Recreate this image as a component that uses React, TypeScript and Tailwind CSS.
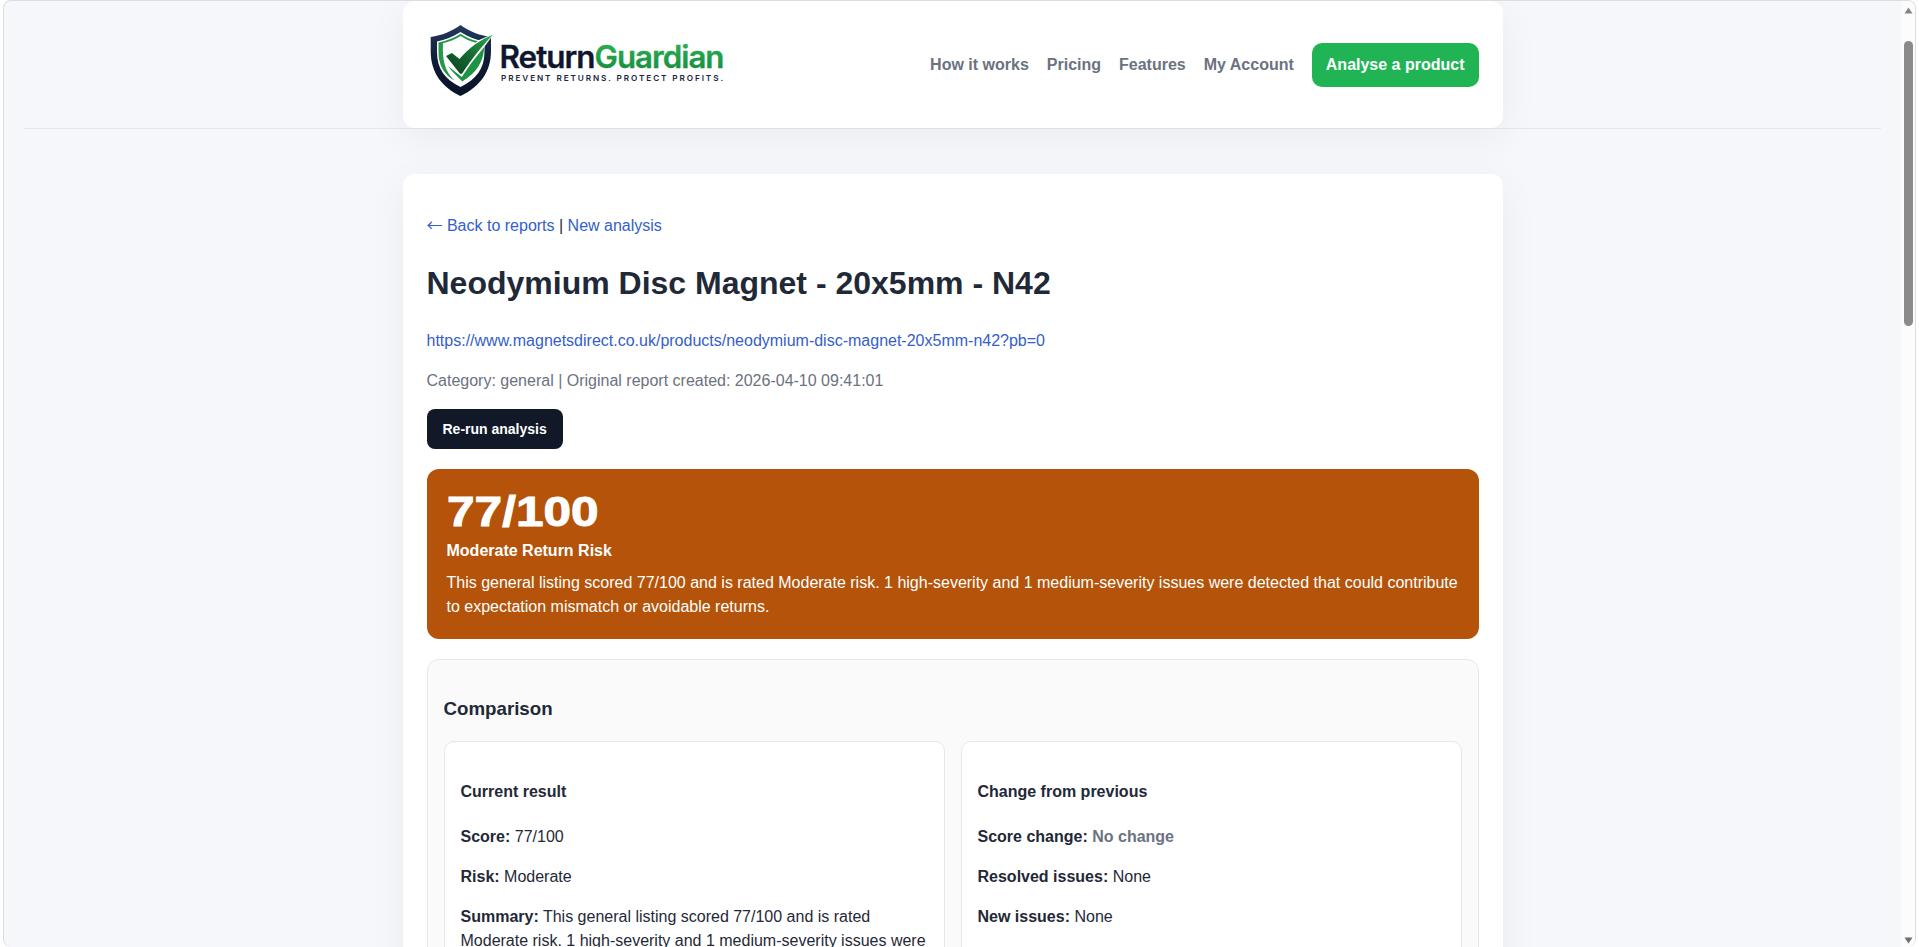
import React from 'react';

const navLinks = ['How it works', 'Pricing', 'Features', 'My Account'];

const summary =
  'This general listing scored 77/100 and is rated Moderate risk. 1 high-severity and 1 medium-severity issues were detected that could contribute to expectation mismatch or avoidable returns.';

const currentResult = [
  { label: 'Score:', value: '77/100' },
  { label: 'Risk:', value: 'Moderate' },
  { label: 'Summary:', value: summary },
];

const changes = [
  { label: 'Score change:', value: 'No change', muted: true },
  { label: 'Resolved issues:', value: 'None', muted: false },
  { label: 'New issues:', value: 'None', muted: false },
];

const Logo: React.FC = () => (
  <svg width="300" height="80" viewBox="0 0 300 80" role="img" aria-label="ReturnGuardian">
    <defs>
      <linearGradient id="navy" x1="0" y1="0" x2="0" y2="1">
        <stop offset="0" stopColor="#233a5e" />
        <stop offset="0.5" stopColor="#101c36" />
        <stop offset="1" stopColor="#0a1228" />
      </linearGradient>
      <linearGradient id="tick" x1="0" y1="1" x2="1" y2="0">
        <stop offset="0" stopColor="#0a4020" />
        <stop offset="0.5" stopColor="#156b33" />
        <stop offset="1" stopColor="#2cae4c" />
      </linearGradient>
      <linearGradient id="word" x1="0" y1="0" x2="0" y2="1">
        <stop offset="0" stopColor="#2fb457" />
        <stop offset="1" stopColor="#128a3c" />
      </linearGradient>
    </defs>
    {/* Shield */}
    <path fill="url(#navy)" d="M33.500 5 C42 11 52 15.500 64 17 V31 C64 53 52 67 33.500 76 C15 67 3.700 53 3.700 31 V17 C15 15.500 25 11 33.500 5 Z" />
    <path fill="#fff" d="M33.500 12 C41 16.800 49 20 57.500 21.500 V32 C57.500 49 49 59.500 33.500 67 C18 59.500 10 49 10 32 V21.500 C18 20 26 16.800 33.500 12 Z" />
    {/* Inner outline */}
    <path
      fill="#25984a"
      d="M33.500 13.800 C39 17.500 44 19.700 51 21.200 L49 22.700 C43 21.200 38 19 33.500 16 C28 19.500 22 22 16 23.200 C15 40 18 51.500 27.500 60.500 C16 54 11.500 44 11.500 32 V22.500 C20 20.700 27 18.200 33.500 13.800 Z"
    />
    <path fill="#1f9344" d="M21 46 L34.800 57 L57 24 C58 41 49 53 35.300 61.500 C31 57 25 52 21 46 Z" />
    <path fill="#fff" d="M17.500 36 L34.200 55.500 L58 26 L67 13.500 L52 20 L32 38 Z" />
    {/* Tick */}
    <path fill="url(#tick)" d="M19 36 L25 33 L32.500 39 C42 28 53 19.800 66 14.800 C54 27 45 39 35 53.700 L33 53.700 Z" />
    <text
      x="72.500"
      y="48"
      textLength="95"
      lengthAdjust="spacingAndGlyphs"
      className="font-['Inter'] text-[31px] font-semibold tracking-[-1px]"
      fill="#0f172f"
      stroke="#0f172f"
      strokeWidth="0.3"
    >
      Return
    </text>
    <text
      x="167.500"
      y="48"
      textLength="129"
      lengthAdjust="spacingAndGlyphs"
      className="font-['Inter'] text-[31px] font-semibold tracking-[-1px]"
      fill="url(#word)"
      stroke="url(#word)"
      strokeWidth="0.3"
    >
      Guardian
    </text>
    <text x="74" y="60.500" textLength="222" lengthAdjust="spacing" className="font-['Inter'] text-[8.200px] font-semibold" fill="#1c2640">
      PREVENT RETURNS. PROTECT PROFITS.
    </text>
  </svg>
);

const Scrollbar: React.FC = () => (
  <div className="flex h-full w-[14px] shrink-0 flex-col items-center bg-[#fcfcfd]">
    <svg className="mt-[6px] shrink-0" width="9" height="7" viewBox="0 0 9 7">
      <path d="M4.500 0.500 L8.500 6.500 H0.500 Z" fill="#858585" />
    </svg>
    <div className="mt-[27px] h-[285px] w-[9px] shrink-0 rounded-full bg-[#8b8b8b]" />
    <svg className="mt-auto mb-[3px] shrink-0" width="9" height="7" viewBox="0 0 9 7">
      <path d="M4.500 6.500 L8.500 0.500 H0.500 Z" fill="#6f6f6f" />
    </svg>
  </div>
);

export default function App() {
  return (
    <div className="h-[947px] bg-white pr-[3px] pl-[3px] font-['Liberation_Sans',Arial,sans-serif] text-base leading-6 text-[#1f2937]">
      <div className="flex h-full overflow-hidden rounded-lg border border-b-0 border-[#dddde1] bg-[#f6f7fb]">
        <div className="min-w-0 flex-1 overflow-hidden px-5">
          {/* Header */}
          <header className="border-b border-[#e5e7eb]">
            <div className="mx-auto flex h-[127px] w-[1100px] items-center justify-between rounded-xl bg-white px-6 shadow-[0_10px_40px_rgba(15,23,42,0.05)]">
              <a className="-mt-[9px] block">
                <Logo />
              </a>
              <nav className="flex items-center gap-[18px] font-bold text-[#6b7280]">
                {navLinks.map((link) => (
                  <a key={link}>{link}</a>
                ))}
                <a className="rounded-[10px] bg-[#20b455] px-[14px] py-[10px] text-white">Analyse a product</a>
              </nav>
            </div>
          </header>

          {/* Report */}
          <main className="mx-auto mt-[45px] w-[1100px] rounded-xl bg-white p-6 shadow-[0_10px_40px_rgba(15,23,42,0.05)]">
            <p className="mt-4">
              <a className="text-[#3460c9]">
                <span className="inline-block w-4 font-['Noto_Sans_CJK_SC'] leading-4">←</span> Back to reports
              </a>{' '}
              | <a className="text-[#3460c9]">New analysis</a>
            </p>
            <h1 className="my-[21.440px] text-[32px] leading-[48px] font-bold">Neodymium Disc Magnet - 20x5mm - N42</h1>
            <p>
              <a className="text-[#3460c9]">https://www.magnetsdirect.co.uk/products/neodymium-disc-magnet-20x5mm-n42?pb=0</a>
            </p>
            <p className="mt-4 text-[#6b7280]">Category: general | Original report created: 2026-04-10 09:41:01</p>
            <button className="mt-4 block h-10 rounded-lg bg-[#111827] px-4 text-sm leading-4 font-bold text-white">
              Re-run analysis
            </button>

            <section className="mt-5 rounded-xl bg-[#b45309] p-5 text-white">
              <div className="mb-1.5 w-fit origin-left scale-x-[1.180] pt-0.5 text-[42px] leading-[42px] font-bold [-webkit-text-stroke:1px_#fff]">
                77/100
              </div>
              <div className="font-bold">Moderate Return Risk</div>
              <p className="mt-2">{summary}</p>
            </section>

            <section className="mt-5 rounded-xl border border-[#e5e7eb] bg-[#fafafa] p-4">
              <h3 className="mt-[18.720px] mb-[18.720px] text-[18.720px] leading-[28px] font-bold">Comparison</h3>
              <div className="grid grid-cols-2 gap-4">
                <div className="rounded-[10px] border border-[#e5e7eb] bg-white p-4">
                  <h4 className="my-[21.280px] font-bold">Current result</h4>
                  {currentResult.map((row) => (
                    <p key={row.label} className="mb-4">
                      <strong>{row.label}</strong> {row.value}
                    </p>
                  ))}
                </div>
                <div className="rounded-[10px] border border-[#e5e7eb] bg-white p-4">
                  <h4 className="my-[21.280px] font-bold">Change from previous</h4>
                  {changes.map((row) => (
                    <p key={row.label} className="mb-4">
                      <strong>{row.label}</strong>{' '}
                      <span className={row.muted ? 'font-bold text-[#6b7280]' : ''}>{row.value}</span>
                    </p>
                  ))}
                </div>
              </div>
            </section>
          </main>
        </div>
        <Scrollbar />
      </div>
    </div>
  );
}
